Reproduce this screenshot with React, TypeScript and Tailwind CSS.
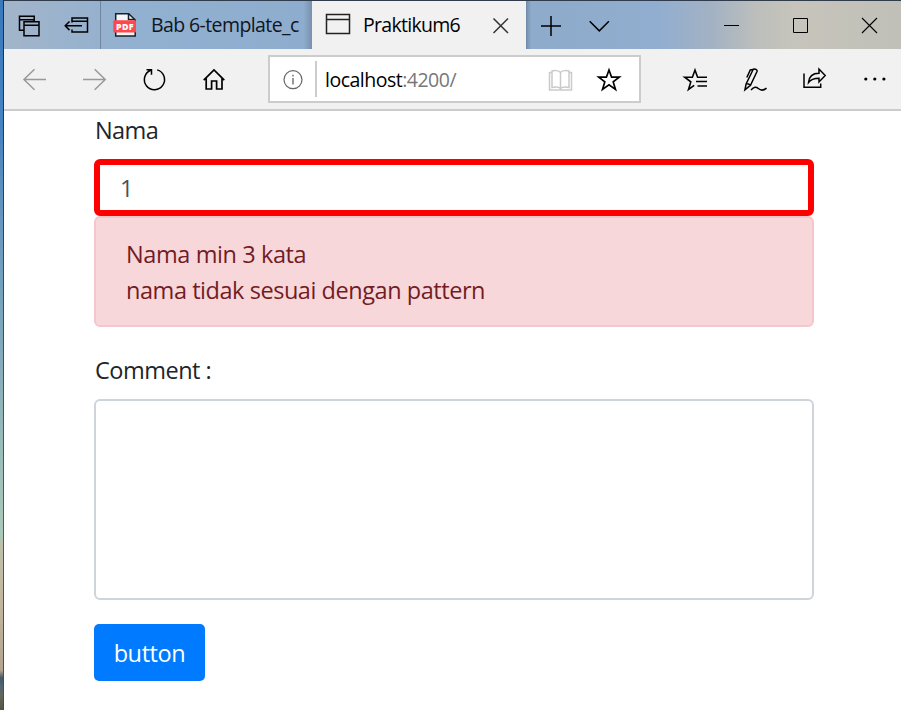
import type { ReactNode } from "react";

type IconProps = { box: string; className: string; children: ReactNode };

// Line icon; the view box is in window coordinates so neighbouring icons share one grid.
function Icon({ box, className, children }: IconProps) {
  return (
    <svg viewBox={box} className={`shrink-0 fill-none stroke-black ${className}`} strokeWidth="1.5">
      {children}
    </svg>
  );
}

function TabBar() {
  return (
    <div className="flex h-12 shrink-0 bg-[linear-gradient(90deg,#a2b5ca_0%,#92b0d0_14%,#8eaccd_35%,#8eabcb_62%,#91aed0_73%,#a3b2c3_79%,#bdbfbc_84%,#c6c4bb_88%,#c1c0b8_100%)]">
      <Icon box="4 1 48 48" className="h-12 w-12">
        <path d="M24 30.2h-4.500V16.300h14.700v5M19.500 19.700h14.700M24 21.800h15v14H24zM24 25.300h15" />
      </Icon>
      <Icon box="52 1 48 48" className="h-12 w-12">
        <path d="M72 22.500V18h15.500v14H72v-2.500M72 21.300h15.500M82 25.800H65.500M69.500 21.500l-4.300 4.300 4.300 4.300" />
      </Icon>
      <div className="w-px bg-[#70869f]" />
      <div className="flex w-[211px] shrink-0 items-center bg-[linear-gradient(90deg,transparent_96%,#7790ad_100%)]">
        <svg viewBox="101 1 48 48" className="h-12 w-[48px] shrink-0">
          <path d="M115.700 13.700h13l6.500 6.300v16h-19.500z" fill="#f4f6f8" stroke="#17202a" strokeWidth="1.500" />
          <path d="M128.500 13.500v6h6.500" fill="none" stroke="#17202a" strokeWidth="1.500" />
          <rect x="113.300" y="20.200" width="22.700" height="12.300" rx="1" fill="#fc4a4c" />
          <text x="124.900" y="29.600" textAnchor="middle" fontSize="8.800" fontWeight="800" letterSpacing="0.300" fill="white" fontFamily="Open Sans, sans-serif">PDF</text>
        </svg>
        <span className="ml-0.5 text-[19.500px] leading-8 tracking-[-0.600px] whitespace-nowrap text-[#10161d]">Bab 6-template_c</span>
      </div>
      <div className="flex w-[214px] shrink-0 items-center bg-[#f1f1f1]">
        <Icon box="312 1 51 48" className="h-12 w-[51px]">
          <path d="M326.500 14.500h23v19h-23zM326.500 19.500h23" className="stroke-[#222]" />
        </Icon>
        <span className="w-[112px] text-[19.500px] leading-8 tracking-[-0.700px] text-black">Praktikum6</span>
        <Icon box="475 1 51 48" className="h-12 w-[51px]">
          <path d="M493.500 18.500l14.500 14.500m0-14.500l-14.500 14.500" className="stroke-[#333]" />
        </Icon>
      </div>
      <div className="w-[5px] bg-linear-to-r from-[#718aa8] to-transparent" />
      <Icon box="531 1 44 48" className="h-12 w-[44px]">
        <path d="M541 26h20M551 16v20" />
      </Icon>
      <Icon box="575 1 50 48" className="h-12 w-[50px]">
        <path d="M589.700 21.300l9.600 9.600 9.600-9.600" />
      </Icon>
      <div className="grow" />
      <Icon box="697 1 68 48" className="h-12 w-[68px]">
        <path d="M724 25.500h15" strokeWidth="1" />
      </Icon>
      <Icon box="765 1 70 48" className="h-12 w-[70px]">
        <path d="M793.500 18.500h14v14h-14z" strokeWidth="1" />
      </Icon>
      <Icon box="835 1 66 48" className="h-12 w-[66px]">
        <path d="M862 18l15 15m0-15l-15 15" strokeWidth="1.100" />
      </Icon>
    </div>
  );
}

function Toolbar() {
  return (
    <div className="flex h-[62px] shrink-0 items-center border-b-2 border-[#cccccc] bg-[#f1f1f1]">
      <Icon box="4 49 60 60" className="h-[60px] w-[60px]">
        <path d="M46 79.500H24M34.500 69.300L24 79.500l10.500 10.200" className="stroke-[#999]" />
      </Icon>
      <Icon box="64 49 60 60" className="h-[60px] w-[60px]">
        <path d="M83 79.500h22M94.700 69.300l10.500 10.200-10.500 10.200" className="stroke-[#999]" />
      </Icon>
      <Icon box="124 49 60 60" className="h-[60px] w-[60px]">
        <path d="M157.200 69.900A10.100 10.100 0 1 1 150.800 70.200M146.500 69.700h5v5" />
      </Icon>
      <Icon box="184 49 84 60" className="h-[60px] w-[84px]">
        <path d="M203.700 80.200L214 69.900l10.300 10.300M206.200 78v11h5.400v-8h5v8h5.400V78" strokeWidth="1.700" />
      </Icon>
      <div className="flex h-12 w-[373px] shrink-0 items-center border-2 border-[#cccccc] bg-white">
        <Icon box="270 57 45 44" className="h-[44px] w-[45px]">
          <circle cx="293" cy="79.700" r="9" stroke="#666" strokeWidth="1.200" />
          <path d="M293 78v6.500M293 74.700v1.800" stroke="#777" />
        </Icon>
        <div className="h-9 w-0.5 bg-[#cccccc]" />
        <span className="ml-2 w-[210px] pt-0.5 text-[19.500px] leading-8 tracking-[-0.500px] text-black">
          localhost<span className="text-[#777]">:4200/</span>
        </span>
        <Icon box="535 57 50 44" className="h-[44px] w-[50px]">
          <path d="M560.500 72.500v15.500M560.500 72.500c-1.500-2-6-2.500-8.500-1.500v16.500c3-.7 7-.5 8.500 1 1.500-1.500 5.500-1.700 8.500-1V71c-2.500-1-7-.5-8.500 1.500M551.500 72.500h-2v17.500h22V72.500h-2" className="stroke-[#cacaca]" />
        </Icon>
        <Icon box="585 57 54 44" className="h-[44px] w-[54px]">
          <path d="M609 70l2.600 7.200h7.700l-6.100 4.700 2.300 7.500-6.500-4.500-6.500 4.500 2.300-7.500-6.100-4.700h7.700z" strokeWidth="1.700" />
        </Icon>
      </div>
      <Icon box="641 49 84 60" className="h-[60px] w-[84px]">
        <path d="M707 77.200h-9.400L695 70l-2.600 7.200h-7.700l6.100 4.700-2.300 7.500 5.700-4M696 81.500h11M697.500 86h9.500" strokeWidth="1.600" />
      </Icon>
      <Icon box="725 49 60 60" className="h-[60px] w-[60px]">
        <path d="M744.900 89.800l1.200-5.800 6.800-14c.8-1.800 4.900-.6 4.100 1.500L750.500 85.300zM746 84c1-.5 3.800.3 4.300 1.300M753 69.500l-2.700.5-3.500 7.500M751 90c3-3.500 5.200-3.300 7.300-1.500 2.500 2.200 5.200 2.200 8.200-.4" />
      </Icon>
      <Icon box="785 49 60 60" className="h-[60px] w-[60px]">
        <path d="M804 73.500v13.700h16.700V83.500M808.500 82.500c.5-6 3.500-9.300 10.500-9.300V69l6.200 6.500-6.200 6.500v-3.700c-5 0-8 .8-10.500 4.200z" />
      </Icon>
      <Icon box="845 49 56 60" className="h-[60px] w-[56px]">
        <g className="fill-black stroke-none">
          <circle cx="865.800" cy="79" r="1.600" />
          <circle cx="874.800" cy="79" r="1.600" />
          <circle cx="883.900" cy="79" r="1.600" />
        </g>
      </Icon>
    </div>
  );
}

function DemoForm() {
  return (
    <form className="flex grow flex-col bg-white pt-px pl-[90px] text-[23.500px] leading-9 text-[#212529]">
      <label htmlFor="nama" className="pl-px tracking-[-0.600px]">Nama</label>
      <input
        id="nama"
        defaultValue="1"
        className="mt-[11px] h-[57px] w-[720px] rounded-md border-6 border-[#ff0000] px-5 text-[#495057] outline-none"
      />
      <div className="h-[111px] w-[720px] rounded-md border-2 border-[#f5c6cb] bg-[#f8d7da] px-[30px] pt-[18px] text-[#721c24]">
        <p className="tracking-[-0.400px]">Nama min 3 kata</p>
        <p className="tracking-[-0.450px]">nama tidak sesuai dengan pattern</p>
      </div>
      <label htmlFor="comment" className="mt-[25px] pl-px tracking-[-0.500px]">Comment :</label>
      <textarea id="comment" className="mt-[11px] h-[201px] w-[720px] resize-none rounded-md border-2 border-[#ced4da]" />
      <button type="button" className="mt-6 h-[57px] w-[111px] rounded-[5px] bg-[#007bff] tracking-[-0.400px] text-white">button</button>
    </form>
  );
}

export default function App() {
  return (
    <div className="flex h-[710px] w-[901px] overflow-hidden font-['Open_Sans','Noto_Sans',sans-serif]">
      <div className="w-[3px] shrink-0 bg-[linear-gradient(180deg,#3879bd_0px,#4784c2_130px,#6797bf_220px,#80a9bd_340px,#9abdb9_450px,#abc9b9_535px,#bec0a9_545px,#c3b9a1_590px,#b4a590_670px,#435766_678px,#526572_686px,#65665a_696px,#525448_710px)]" />
      <div className="w-px shrink-0 bg-[linear-gradient(180deg,#202e41,#34495f_40%,#4d5d5d_75%,#4d4943)]" />
      <div className="flex grow flex-col border-t border-[#303b4c]">
        <TabBar />
        <Toolbar />
        <DemoForm />
      </div>
    </div>
  );
}
